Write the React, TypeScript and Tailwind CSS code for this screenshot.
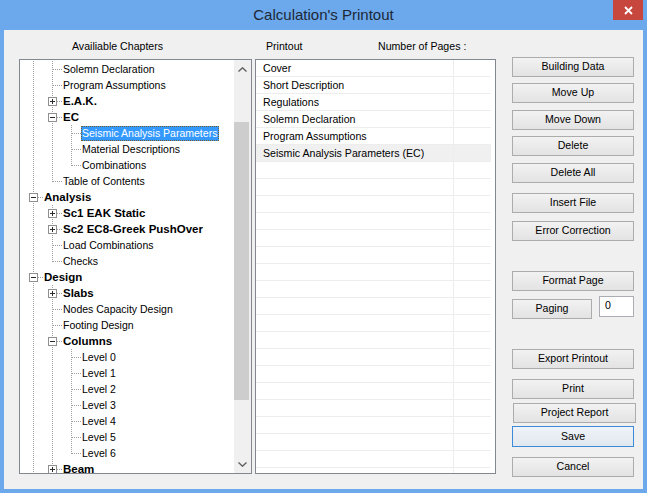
import React from 'react';

type Guide = 'I' | 'T' | 'L' | ' ';

interface TreeRow {
  label: string;
  guides: Guide[];
  bold?: boolean;
  expander?: '+' | '-';
  selected?: boolean;
}

const treeRows: TreeRow[] = [
  { label: 'Solemn Declaration', guides: ['I', 'T'] },
  { label: 'Program Assumptions', guides: ['I', 'T'] },
  { label: 'E.A.K.', guides: ['I', 'T'], bold: true, expander: '+' },
  { label: 'EC', guides: ['I', 'T'], bold: true, expander: '-' },
  { label: 'Seismic Analysis Parameters', guides: ['I', 'I', 'T'], selected: true },
  { label: 'Material Descriptions', guides: ['I', 'I', 'T'] },
  { label: 'Combinations', guides: ['I', 'I', 'L'] },
  { label: 'Table of Contents', guides: ['I', 'L'] },
  { label: 'Analysis', guides: ['T'], bold: true, expander: '-' },
  { label: 'Sc1 EAK Static', guides: ['I', 'T'], bold: true, expander: '+' },
  { label: 'Sc2 EC8-Greek PushOver', guides: ['I', 'T'], bold: true, expander: '+' },
  { label: 'Load Combinations', guides: ['I', 'T'] },
  { label: 'Checks', guides: ['I', 'L'] },
  { label: 'Design', guides: ['T'], bold: true, expander: '-' },
  { label: 'Slabs', guides: ['I', 'T'], bold: true, expander: '+' },
  { label: 'Nodes Capacity Design', guides: ['I', 'T'] },
  { label: 'Footing Design', guides: ['I', 'T'] },
  { label: 'Columns', guides: ['I', 'T'], bold: true, expander: '-' },
  { label: 'Level 0', guides: ['I', 'I', 'T'] },
  { label: 'Level 1', guides: ['I', 'I', 'T'] },
  { label: 'Level 2', guides: ['I', 'I', 'T'] },
  { label: 'Level 3', guides: ['I', 'I', 'T'] },
  { label: 'Level 4', guides: ['I', 'I', 'T'] },
  { label: 'Level 5', guides: ['I', 'I', 'T'] },
  { label: 'Level 6', guides: ['I', 'I', 'L'] },
  { label: 'Beam', guides: ['I', 'T'], bold: true, expander: '+' },
];

const printout = [
  'Cover',
  'Short Description',
  'Regulations',
  'Solemn Declaration',
  'Program Assumptions',
  'Seismic Analysis Parameters (EC)',
];

const DOT = '#a0a0a0';

function GuideCell({ guide, expander }: { guide: Guide; expander?: '+' | '-' }) {
  return (
    <svg width="19" height="16" className="block shrink-0" shapeRendering="crispEdges">
      {guide !== ' ' && (
        <line x1="9.5" y1="0" x2="9.5" y2={guide === 'L' ? 9 : 16} stroke={DOT} strokeDasharray="1 1" />
      )}
      {(guide === 'T' || guide === 'L') && (
        <line x1="10" y1="8.5" x2="19" y2="8.5" stroke={DOT} strokeDasharray="1 1" />
      )}
      {expander && (
        <g>
          <rect x="5.5" y="4.5" width="8" height="8" fill="#fff" stroke="#8f8f8f" />
          <line x1="7" y1="8.5" x2="12" y2="8.5" stroke="#2b2b2b" />
          {expander === '+' && <line x1="9.5" y1="6" x2="9.5" y2="11" stroke="#2b2b2b" />}
        </g>
      )}
    </svg>
  );
}

function Chevron({ up }: { up?: boolean }) {
  return (
    <svg width="9" height="5" viewBox="0 0 9 5" className="block">
      <path d={up ? 'M0.5 4.5 L4.5 0.8 L8.5 4.5' : 'M0.5 0.5 L4.5 4.2 L8.5 0.5'} fill="none" stroke="#606060" strokeWidth="1.4" />
    </svg>
  );
}

function Btn({ label, className = '', width = 'w-[122px]' }: { label: string; className?: string; width?: string }) {
  return (
    <button
      className={`flex h-[20px] ${width} items-center justify-center border border-[#acacac] bg-linear-to-b from-[#f2f2f2] to-[#e3e3e3] text-[10.6px] text-black ${className}`}
    >
      {label}
    </button>
  );
}

export default function App() {
  return (
    <div className="flex h-[493px] w-[647px] flex-col bg-[#6ba8ec] font-['Liberation_Sans',Arial,sans-serif]">
      {/* title bar */}
      <div className="flex h-[30px] shrink-0 items-start">
        <div className="w-[34px]" />
        <div className="flex h-[30px] flex-1 items-center justify-center text-[15px] text-[#1d2837]">
          Calculation's Printout
        </div>
        <div className="mr-[4px] flex h-[20px] w-[30px] items-center justify-center bg-[#c7473f]">
          <svg width="9" height="9" viewBox="0 0 9 9">
            <path d="M1 1 L8 8 M8 1 L1 8" stroke="#fff" strokeWidth="1.8" />
          </svg>
        </div>
      </div>

      {/* client area */}
      <div className="mx-[4px] mb-[4px] flex flex-1 bg-[#f0f0f0] pl-[15px] text-black">
        {/* chapters */}
        <div className="flex w-[233px] flex-col">
          <div className="h-[29px] pl-[53px] pt-[10px] text-[10.6px] leading-[13px]">Availiable Chapters</div>
          <div className="flex h-[415px] border border-[#828790] bg-white">
            <div className="flex-1 overflow-hidden pl-[4px] pt-[1px]">
              {treeRows.map((row, i) => (
                <div key={i} className="flex h-[16px] items-center">
                  {row.guides.map((g, j) => (
                    <GuideCell key={j} guide={g} expander={j === row.guides.length - 1 ? row.expander : undefined} />
                  ))}
                  <span
                    className={`whitespace-nowrap pl-[1px] pr-[2px] leading-[15px] ${
                      row.bold ? 'text-[11.5px] font-bold' : 'text-[10.5px]'
                    } ${row.selected ? 'bg-[#3399ff] text-white outline-1 -outline-offset-1 outline-dotted outline-[#7b5b2a]' : ''}`}
                  >
                    {row.label}
                  </span>
                </div>
              ))}
            </div>
            <div className="flex w-[17px] flex-col bg-[#f0f0f0]">
              <div className="flex h-[17px] items-center justify-center pt-[1px]">
                <Chevron up />
              </div>
              <div className="h-[45px]" />
              <div className="h-[278px] pr-[2px]">
                <div className="h-full bg-[#cdcdcd]" />
              </div>
              <div className="flex-1" />
              <div className="flex h-[17px] items-center justify-center">
                <Chevron />
              </div>
            </div>
          </div>
        </div>

        {/* printout */}
        <div className="ml-[3px] flex w-[241px] flex-col">
          <div className="flex h-[29px] pl-[11px] pt-[10px] text-[10.6px] leading-[13px]">
            <span className="w-[112px]">Printout</span>
            <span>Number of Pages :</span>
          </div>
          <div className="h-[415px] overflow-hidden border border-[#828790] bg-white">
            {Array.from({ length: 25 }).map((_, i) => (
              <div
                key={i}
                className={`flex h-[17px] w-[235px] border-b border-[#ededed] ${i === 5 ? 'bg-[#f0f0f0]' : ''}`}
              >
                <div className="w-[197px] whitespace-nowrap pl-[7px] text-[10.6px] leading-[16px]">
                  {printout[i] ?? ''}
                </div>
                <div className="flex-1 border-l border-[#ededed]" />
              </div>
            ))}
          </div>
        </div>

        {/* buttons */}
        <div className="ml-[16px] flex w-[124px] flex-col pt-[27px]">
          <Btn label="Building Data" />
          <Btn label="Move Up" className="mt-[6px]" />
          <Btn label="Move Down" className="mt-[7px]" />
          <Btn label="Delete" className="mt-[6px]" />
          <Btn label="Delete All" className="mt-[7px]" />
          <Btn label="Insert File" className="mt-[10px]" />
          <Btn label="Error Correction" className="mt-[8px]" />
          <Btn label="Format Page" className="mt-[30px]" />
          <div className="mt-[5px] flex h-[21px] items-start">
            <Btn label="Paging" className="mt-[3px]" width="w-[80px]" />
            <div className="ml-[7px] h-[21px] w-[35px] border border-[#abadb3] bg-white pl-[5px] pt-[2px] text-[10.6px] leading-[13px]">
              0
            </div>
          </div>
          <Btn label="Export Printout" className="mt-[32px]" />
          <Btn label="Print" className="mt-[10px]" />
          <Btn label="Project Report" className="ml-[1px] mt-[4px]" width="w-[123px]" />
          <button className="mt-[3px] flex h-[21px] w-[122px] items-center justify-center border border-[#3c8ad8] bg-linear-to-b from-[#eef3f8] to-[#e1e8ef] text-[10.6px] text-black">
            Save
          </button>
          <Btn label="Cancel" className="mt-[10px]" />
        </div>
      </div>
    </div>
  );
}
